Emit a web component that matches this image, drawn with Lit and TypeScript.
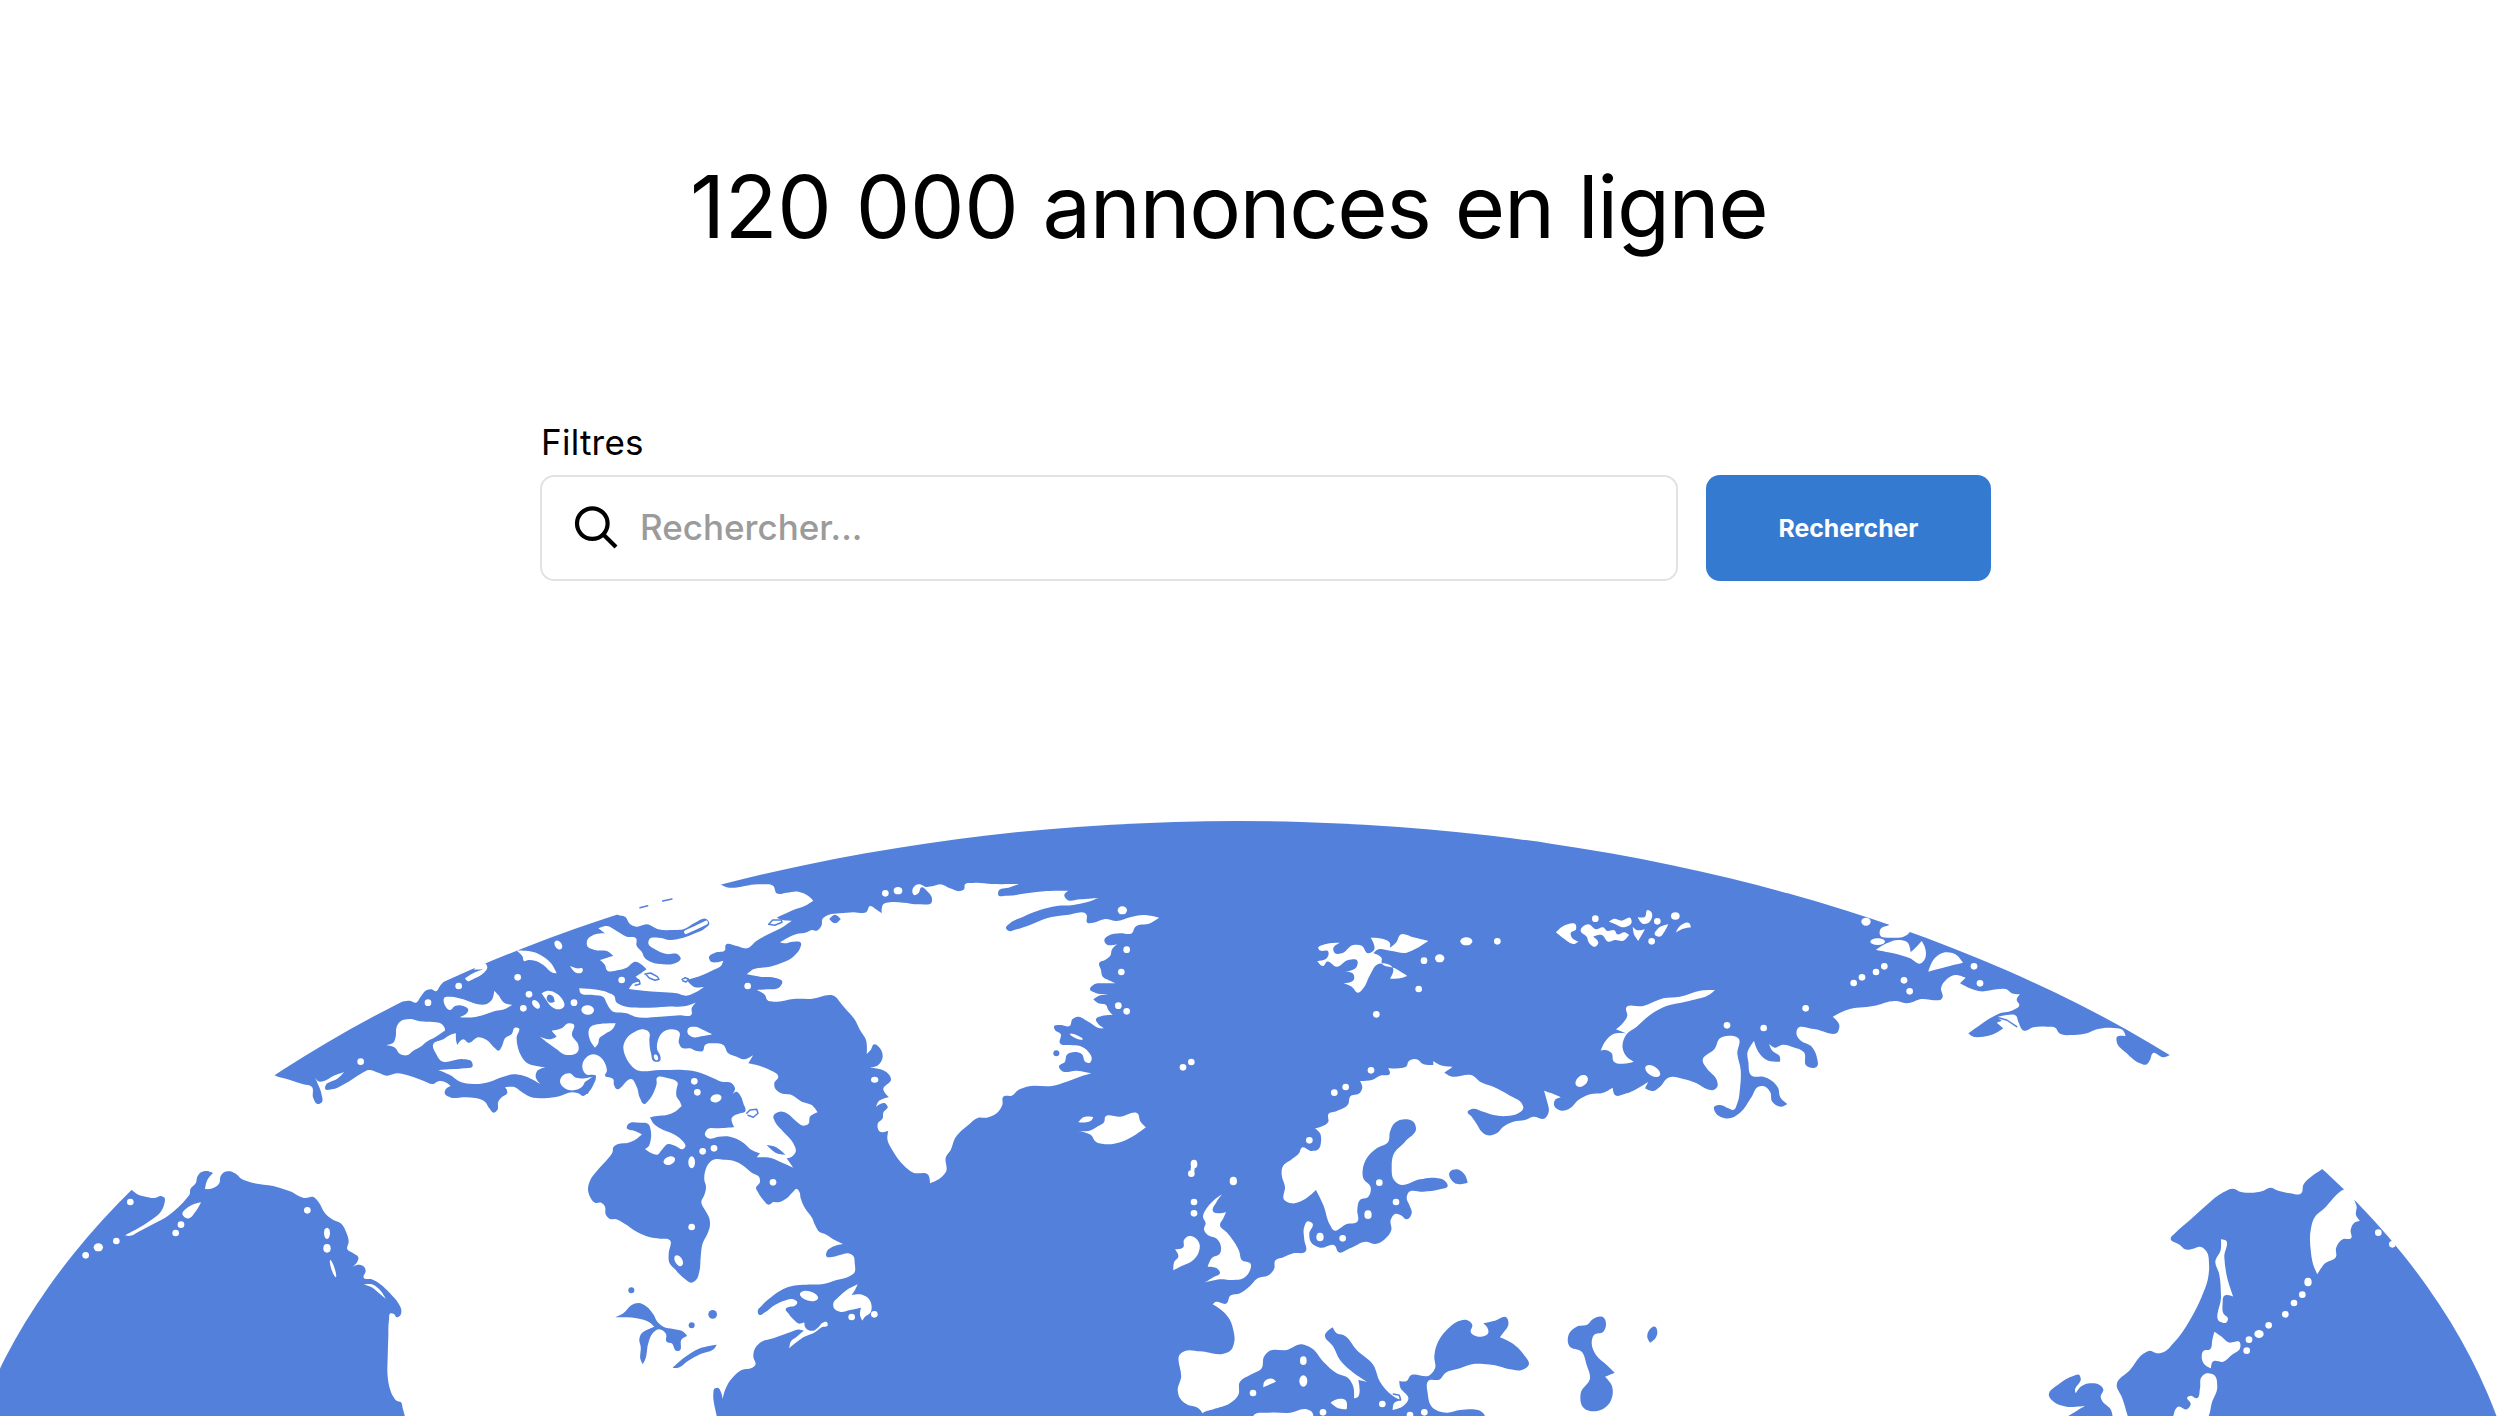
import { LitElement, html, svg, css } from "lit";
import { customElement } from "lit/decorators.js";

type Pt = [number, number];

/* Coastlines are drawn on sheets; each sheet has its own origin and three units per pixel. */
const SHEETS: Record<string, Pt> = {
  A: [250, 880],
  B: [580, 870],
  C: [840, 870],
  D: [560, 1080],
  E: [1040, 1050],
  F: [1300, 900],
  G: [1600, 960],
  H: [1820, 900],
  I: [2030, 1150],
  J: [0, 1150],
};

function place(sheet: string, x: number, y: number): Pt {
  const o = SHEETS[sheet];
  return [o[0] + x / 3, o[1] + y / 3];
}

function parse(src: string): Pt[] {
  let sheet = "A";
  const out: Pt[] = [];
  for (const tok of src.trim().split(/\s+/)) {
    if (SHEETS[tok]) {
      sheet = tok;
      continue;
    }
    const [x, y] = tok.split(",").map(Number);
    out.push(place(sheet, x, y));
  }
  return out;
}

/* Closed smooth curve through the points; sharp turns stay corners. */
function shore(src: string): string {
  const p = parse(src);
  const n = p.length;
  const dir: Pt[] = p.map((c, i) => {
    const a = p[(i + n - 1) % n];
    const b = p[(i + 1) % n];
    const ux = c[0] - a[0], uy = c[1] - a[1], vx = b[0] - c[0], vy = b[1] - c[1];
    const lu = Math.hypot(ux, uy) || 1, lv = Math.hypot(vx, vy) || 1;
    const cos = (ux * vx + uy * vy) / (lu * lv);
    if (cos < -0.1) return [0, 0];
    const tx = ux / lu / lu + vx / lv / lv, ty = uy / lu / lu + vy / lv / lv;
    const l = Math.hypot(tx, ty) || 1;
    return [tx / l, ty / l];
  });
  const f = (v: number) => v.toFixed(1);
  let d = `M${f(p[0][0])} ${f(p[0][1])}`;
  for (let i = 0; i < n; i++) {
    const j = (i + 1) % n;
    const k = Math.hypot(p[j][0] - p[i][0], p[j][1] - p[i][1]) / 3;
    d += `C${f(p[i][0] + dir[i][0] * k)} ${f(p[i][1] + dir[i][1] * k)} ${f(p[j][0] - dir[j][0] * k)} ${f(p[j][1] - dir[j][1] * k)} ${f(p[j][0])} ${f(p[j][1])}`;
  }
  return d + "Z";
}

function trace(src: string): string {
  return "M" + parse(src).map((q) => `${q[0].toFixed(1)} ${q[1].toFixed(1)}`).join("L");
}

const LAND = [
  // North America
  `J 395,120 415,134 440,141 465,144 482,138 492,142 492,165 480,188 450,212 412,236 374,256 385,258 420,243 460,222 500,200 535,172 560,145 569,133 571,118 588,98 592,80 603,67 620,63 639,69 622,90 615,117 630,117 658,100 662,78 672,67 690,64 705,70 725,87 760,99 820,108 870,124 915,144 940,141 955,155 975,190 1000,210 1022,220 1038,245 1046,275 1042,298 1060,310 1075,322 1070,338 1058,350 1075,344 1092,350 1097,362 1091,383 1115,388 1140,402 1170,430 1195,460 1204,480 1200,497 1190,502 1182,492 1172,490 1167,510 1165,560 1163,620 1163,680 1168,710 1180,740 1190,752 1203,757 1208,775 1215,800 1225,900
   D 470,1100 470,1008 463,975 460,945 465,925 473,923 483,937 488,957 492,940 505,910 525,885 545,870 575,864 586,855 580,830 582,812 600,788 640,775 690,757 720,749 731,752 710,770 692,785 688,805 705,790 730,772 765,757 785,742 803,736 800,726 788,728 775,742 760,752 745,750 735,740 733,727 718,731 700,718 685,700 677,687 690,680 705,677 712,667 700,658 670,663 640,678 615,697 597,704 593,693 605,677 635,650 670,627 700,617 740,614 790,612 830,600 870,588 883,578 884,550 880,528 865,520 840,525 815,531 800,530 800,515 815,502 849,492 820,478 795,462 780,457 765,435 757,415 735,385 722,355 718,335 710,327 698,337 680,355 655,367 640,366 627,374 610,360 595,338 588,325 600,305 598,292 575,278 550,257 520,242 490,239 460,239 445,252 435,275 433,300 438,320 433,345 424,365 435,390 448,415 450,435 443,460 428,490 422,530 418,575 408,600 393,608 375,597 345,568 328,548 326,520 329,480 300,476 265,470 230,455 195,432 165,417 150,417 138,405 134,378 125,369 105,368 90,350 84,328 90,302 115,268 145,235 158,215 160,202 175,192 205,188 225,180 246,163 225,153 200,142 205,132 240,128 265,132 272,150 272,180 265,200 255,207 275,220 292,224 305,210 325,192 345,197 370,207 376,200 365,180 340,162 300,145 280,130 270,112 290,108 320,105 345,95 365,78
   B 305,708 300,695 290,680 290,655 293,640 265,625 230,625 230,640 222,665 205,692 193,702 180,685 170,650 152,627 138,635 125,650 112,658 102,645 100,628 75,615
   A 1070,575 1067,555 1050,530 1030,523 1008,533 997,560 1008,583 1036,588 1030,615 1012,640 1000,648 985,640 965,637 930,648 880,655 840,650 810,632 795,622 765,622 772,638 755,652 745,665 742,690 732,698 718,685 705,665 680,655 640,652 600,652 584,640 587,628 602,618 585,606 565,604 550,612 520,602 480,588 440,580 410,587 385,578 355,570 335,580 290,608 245,628 226,627 228,614 240,606 262,596 282,577 250,588 222,603 205,604 195,592 205,615 214,640 214,668 203,672 190,655 185,620 160,613 120,600 72,585 20,540 -500,560
   J 300,60`,
  // Arctic archipelago
  `A 458,364 480,362 497,368 512,350 530,330 545,328 557,334 570,318 582,304 540,280 430,350`,
  `A 645,295 665,282 700,268 672,269 690,250 708,252 712,262 700,280 670,297 652,303`,
  `A 800,212 820,212 850,216 880,230 905,252 920,280 908,278 880,255 855,242 835,240 822,243 818,230`,
  `A 960,258 980,265 998,267 996,277 980,279`,
  `A 875,340 890,333 915,338 935,355 942,380 925,388 905,380 885,355`,
  `A 585,352 600,350 640,358 680,372 710,372 725,360 733,332 745,345 765,370 787,374 765,387 735,393 700,405 670,412 628,412 650,400 655,390 640,378 615,378 600,390 587,380`,
  `A 408,495 430,488 437,470 440,440 450,425 480,417 510,424 550,426 575,432 585,450 570,465 550,475 530,485 515,498 490,512 470,526 450,522 435,503`,
  `A 550,492 580,478 600,465 618,460 618,480 622,495 640,478 655,488 685,472 710,480 735,505 745,512 755,500 765,475 785,462 795,443 806,445 800,470 803,500 815,530 830,548 860,558 887,562 860,575 857,590 872,613 850,600 820,587 790,583 755,592 720,605 670,612 630,605 600,585 565,570 600,568 640,565 668,557 665,545 640,538 570,540 560,525`,
  `A 870,470 900,478 920,470 905,452 935,445 955,430 970,432 966,465 985,495 985,512 945,524 920,508 895,490`,
  `A 1022,440 1050,432 1097,430 1090,445 1065,462 1048,475 1045,490 1035,503 1025,490`,
  `A 930,603 945,582 960,580 975,592 1028,590 1010,605 990,625 950,628`,
  `B 115,135 135,140 150,162 168,170 200,163 235,178 280,180 310,178 345,158 380,148 388,160 375,175 345,190 310,203 270,210 235,203 208,208 205,220 225,238 260,252 295,254 302,265 285,280 250,283 215,277 195,265 185,245 170,228 168,205 140,200 110,183 80,168 55,175 75,190 40,195 22,210 22,228 45,240 85,245 100,257 60,270 75,285 80,300 115,300 140,293 165,275 200,298 185,308 165,322 180,335 160,340 147,357 190,362 240,366 290,370 318,377 350,365 373,350 345,352 320,330 360,318 400,300 425,285 430,272 390,272 387,262 405,248 435,240 437,225 470,228 500,235 530,212 560,195 610,170 635,152 608,150 590,143 640,120 680,105 700,92 685,78 655,65 620,68 590,70 580,48 540,43 425,45 400,20 100,100`,
  `B -2,355 40,358 85,368 103,378 108,395 130,408 180,413 260,410 320,407 347,398 335,415 335,433 300,436 240,440 165,440 140,430 95,422 80,400 72,383 40,375 0,367`,
  `B 325,475 345,470 370,480 397,493 370,498 335,500 323,490`,
  // Baffin
  `B 130,530 140,505 165,485 190,478 208,488 208,510 213,550 222,574 240,572 240,555 232,540 234,510 245,490 275,478 297,485 297,520 305,533 330,535 350,543 368,543 375,525 405,520 430,525 445,550 470,560 490,568 520,555 505,580 540,588 570,600 595,620 583,640 585,655 600,668 635,675 665,695 695,705 713,727 690,740 685,762 670,767 650,755 620,730 600,725 580,740 585,755 610,785 640,820 647,845 635,860 620,865 640,893 610,880 570,863 530,862 540,850 515,840 490,818 450,800 415,800 385,805 375,795 380,780 420,775 463,772 455,745 480,730 495,725 490,700 480,675 470,665 452,678 465,655 455,640 425,635 390,620 350,605 310,600 240,600 165,597 145,575 133,550`,
  `D 820,670 835,652 860,630 893,613 885,630 875,645 900,643 925,655 935,680 930,700 915,710 907,722 900,705 903,683 870,690 840,695 822,685`,
  // Greenland
  `B 600,217 615,208 650,192 680,187 695,180 710,182 725,165 727,148 745,135 780,130
   C 40,127 80,125 90,108 108,118 125,130 130,103 150,97 190,98 240,103 275,97 275,82 260,62 245,52 235,70 222,75 217,62 225,47 240,43 255,50 280,48 300,43 330,55 360,63 372,58 375,43 400,39 455,42 537,42 510,52 475,65 475,75 500,77 560,70 620,63 685,62 673,75 680,88 720,88 775,84 740,97 700,105 650,108 600,120 550,140 510,160 498,175 505,182 530,178 570,165 620,145 680,135 740,135 742,158 760,158 795,147 830,153 870,142 910,135 957,143 930,160 885,172 877,188 840,190 805,197 793,210 798,222 832,222 815,240 812,255 795,270 778,278 783,300 788,320 805,330 827,340 795,340 760,345 750,358 765,368 808,372 775,378 760,388 775,400 798,405 805,420 818,435 785,438 768,448 775,462 793,475 780,475 745,455 710,441 697,448 690,467 660,465 642,470 645,480 662,492 660,520 690,525 720,528 745,545 755,565 750,578 738,577 725,552 705,546 680,555 675,575 657,590 665,602 710,602 755,610 720,620 680,635 640,647 560,650 535,660 515,677 490,680 487,705 470,730 440,743 415,743 385,765 345,805 332,840 318,860 318,905 300,925 270,940 265,915 220,908 190,885 160,845 142,805 145,782 120,785 113,762 128,745 130,728 143,710 135,700 108,710 115,695 147,682 130,658 153,627 140,607 118,597 90,593 115,585 128,560 120,535 103,523 92,540 80,552 78,510 60,480 45,450 15,415 -5,390
   B 768,382 690,387 640,387 590,395 562,390 555,375 530,360 560,358 600,350 607,335 590,325 540,320 500,313 520,298 570,290 610,277 640,260 660,235 663,220 640,215 612,220`,
  // Iceland
  `C 713,783 745,783 775,768 793,755 795,742 840,740 895,733 900,752 918,772 890,792 845,815 800,823 765,813 755,797`,
  `C 715,757 730,742 760,741 755,750`,
  // British Isles
  `E 547,432 530,455 520,485 540,490 558,486 550,505 540,525 560,547 582,575 598,605 605,630 632,642 628,665 610,685 580,690 540,688 495,697 520,682 540,668 530,655 503,650 515,625 540,610 540,580 528,565 503,555 492,538 497,520 489,500 498,478 520,452`,
  `E 432,570 445,559 465,563 478,580 475,610 460,630 425,648 400,661 403,635 415,620 405,598 430,592`,
  // Svalbard
  `F 55,145 75,133 120,128 100,145 105,160 125,160 160,135 185,137 205,160 222,150 212,113 250,117 270,130 270,143 290,125 300,105 340,112 385,123 350,145 320,158 270,152 230,150 220,160 245,175 245,188 285,205 322,228 300,235 270,236 280,208 235,192 210,225 190,265 175,278 155,260 130,250 162,238 160,222 135,215 170,200 172,182 145,180 110,200 80,185 70,198 52,183 80,175 85,155 58,150`,
  // Franz Josef Land
  `F 768,97 790,78 828,76 828,88 812,100 815,112 835,125 825,131 790,115`,
  `F 842,92 865,73 888,88 910,82 920,92 945,92 950,102 975,97 987,105 970,122 945,120 925,125 905,105 880,110 895,130 885,140 868,130 860,110`,
  `F 927,65 940,57 965,62 992,55 995,65 970,82 945,72`,
  `F 1013,52 1035,50 1043,30 1053,35 1043,70 1030,72`,
  `F 998,80 1010,90 1035,88 1015,123 1003,105`,
  `F 1065,105 1075,85 1105,73 1095,92 1078,110`,
  `F 1127,98 1140,78 1168,70 1173,82 1145,88`,
  // Novaya Zemlya
  `G 78,145 130,138 190,115 240,110 300,92 345,90 330,103 270,122 190,142 150,165 110,200 78,225 68,265 80,290 102,305 40,303 35,280 15,270 2,272 15,245 40,222 78,220 48,208 82,165`,
  // Severnaya Zemlya and New Siberian Islands
  `H 208,75 180,90 180,105 215,113 255,108 270,95 260,60`,
  `H 167,150 200,130 235,120 262,127 272,157 285,145 305,123 314,140 313,180 303,190 270,175 220,160`,
  `H 325,215 340,180 375,157 405,162 429,188 380,200`,
  // Eurasia
  `E 487,1110 487,1090 475,1075 440,1063 420,1045 413,1020 423,985 423,910 435,903 480,904 550,911 570,903 583,875 580,840 570,810 550,785 518,763 525,757 560,760 570,738 600,730 630,708 650,687 690,673 703,655 705,633 730,622 760,610 797,604 793,570 793,530 803,514 817,520 808,550 812,575 840,593 885,587 895,606 930,595 980,575 1005,582 1040,562 1054,540 1052,510 1065,492 1085,497 1100,508 1115,490 1108,465 1100,445 1105,428 1150,425 1200,418 1223,407 1215,393 1180,383 1140,388 1075,402 1062,390 1055,350 1060,315 1095,275 1128,235 1120,215 1095,208 1065,218 1050,245 1045,275 1010,295 980,325 968,360 970,385 992,412 985,440 960,450 952,480 952,515 920,522 880,540 870,525 850,465 828,420 790,450 755,460 733,450 735,410 725,375 728,350 755,328 778,308 785,293 815,303 835,298 843,275 840,250 825,235 865,215 865,193 890,183 925,162 930,140 960,128 967,112 960,93 995,90 1020,77 1050,70 1045,55 1075,55 1100,48 1105,35 1135,30 1145,40 1180,45 1180,33 1200,45 1238,50 1213,68 1230,78
   F 520,528 540,545 580,560 630,587 665,610 670,625 655,640 620,648 580,645 550,635 515,627 503,635 515,650 530,672 545,695 560,705 590,700 610,680 640,665 675,660 700,650 735,655 745,640 740,600 732,572 755,580 783,592 765,600 762,615 785,632 810,625 835,600 870,583 910,578 938,563 945,585 980,580 1045,545 1035,565 1060,573 1080,560
   G 205,353 250,357 290,370 320,387 340,390 352,380 350,360 320,325 308,303 345,265 360,235 385,227 415,235 412,280 422,330 420,385 412,430 400,450 385,445 360,435 342,442 345,455 390,475 420,458 455,410 475,380 490,378 510,395 517,425 545,440 562,432 540,410 535,385 515,362 490,350 455,347 445,305 442,280 462,243 475,275 500,300 540,305 540,292 515,270 507,252 525,263 545,255 580,262 612,277 620,318 650,320 650,290 635,260 600,240 590,225 592,207 640,207 715,213 718,195 698,170 740,150 820,138 890,123 920,130 960,118
   H 368,290 363,265 380,238 405,225 437,233 420,250 450,265 480,274 530,268 560,268 575,280 600,283 590,300 598,315 580,330 540,340 510,355 480,375 445,400 455,408 490,410 520,403 550,385 530,368 545,362 530,352 560,345 588,347 595,365 612,392 640,382 680,380 708,385 715,397 760,405 800,400 830,388 880,384 910,392 917,408 890,412 890,425 920,460 960,490 978,494 990,480 998,460 1030,472 1050,465 1120,440 1500,600
   I 880,55 850,75 820,105 814,130 780,130 745,122 720,113 700,122 650,128 630,125 610,116 580,127 530,165 480,210 435,250 422,265 450,285 465,298 490,296 510,290 530,305 537,340 533,390 515,440 480,510 430,580 400,607 380,610 360,602 345,608 300,660 260,705 275,740 293,798 310,860`,
  // Kamchatka
  `I 945,117 880,178 855,200 842,240 842,300 850,345 862,373 885,340 918,320 918,295 940,267 963,265 962,240 975,217 990,213 978,195 980,170 973,147 1000,110`,
  // Sakhalin, Hokkaido, Honshu
  `I 573,268 585,270 583,320 592,385 610,440 583,437 578,460 580,490 594,507 588,518 572,516 573,440 567,370 556,335 572,300`,
  `I 553,545 575,560 595,577 630,578 630,595 605,615 580,635 548,635 543,655 525,645 515,620 520,603 540,598 547,570`,
  `I 515,680 530,670 552,675 562,710 545,760 535,800 430,830 430,798 445,770 470,778 482,762 472,742 482,737 500,745 510,715`,
  // Alaskan coast islets
  `J 548,195 570,168 603,157 590,180 560,205`,
  `J 1090,403 1115,403 1138,418 1157,446 1140,432 1115,412`,
];

const WATER = [
  `A 895,345 908,348 914,365 900,368 890,355`,
  `B 748,147 765,134 782,147 765,160`,
  `B 560,825 585,830 617,855 590,850`,
  `D 165,712 190,700 215,675 235,669 260,680 280,703 292,725 310,740 340,747 370,755 382,768 365,778 358,812 350,813 335,790 320,785 318,762 298,748 278,760 265,790 255,840 248,853 242,840 242,800 238,778 245,760 265,748 283,740 270,728 230,715 200,712`,
  `D 338,863 370,835 420,805 470,794 465,803 420,823 385,842 350,864`,
  `E 1230,365 1250,358 1275,375 1283,398 1245,400`,
  // Mediterranean and Black Sea
  `E 487,1090 520,1078 570,1060 595,1035 600,995 630,975 665,955 672,920 685,905 740,900 785,883 815,895 850,935 890,970 925,985 940,1010 942,1045 950,1043 955,990 980,995 930,960 900,930 880,890 855,855 878,832 890,850 910,855 950,900 1000,945 1020,995 1055,1035 1080,1050 1062,1060 1058,1080 1090,1068 1105,1048 1080,1010 1078,993 1100,993 1110,978 1170,975 1185,955 1183,920 1190,885 1220,840 1260,812 1280,810 1297,825 1292,845 1320,860 1345,848 1340,830 1330,820 1365,812 1400,803 1405,825 1390,848 1380,862 1420,882 1450,912 1466,945 1445,960 1410,958 1365,946 1330,942 1300,942 1260,955 1215,970 1200,988 1165,993 1163,1030 1175,1070 1220,1088 1260,1080 1330,1090 1330,1160 487,1160`,
  // Caspian Sea
  `E 1588,850 1610,830 1645,822 1655,810 1692,804 1698,825 1690,845 1662,855 1655,880 1668,915 1700,945 1724,968 1695,980 1715,1006 1711,1055 1672,1083 1632,1075 1622,1030 1650,985 1640,945 1625,905 1588,888`,
  `E 1822,862 1828,840 1845,830 1852,845 1845,866 1830,878`,
  // Yellow Sea
  `I 245,830 243,780 215,750 212,740 220,718 205,703 180,700 155,708 137,730 135,722 152,685 148,675 130,678 90,700 57,738 75,758 110,770 165,767 115,798 60,830`,
];

const ISLES = [
  `E 670,1012 672,997 700,987 708,995 690,1003`,
  `E 872,1058 885,1050 918,1052 920,1078 895,1075`,
  `E 640,1098 690,1088 750,1088 800,1078 815,1085 822,1110 640,1130`,
];

/* sheet, x, y, rx, ry, rotation */
const DOTS: [string, number, number, number?, number?, number?][] = [
  ["A", 925, 195, 10, 15, -35], ["A", 803, 292], ["A", 626, 318], ["A", 534, 368], ["A", 837, 343],
  ["A", 820, 385], ["A", 972, 368], ["A", 1115, 300], ["A", 332, 545], ["A", 858, 373, 9, 15, -40], ["A", 1013, 390, 19, 14, 5],
  ["B", 503, 348], ["B", 343, 634], ["B", 352, 667], ["B", 408, 685, 17, 12, -15], ["B", 368, 844], ["B", 402, 835],
  ["B", 268, 872, 18, 12, -20], ["B", 335, 877, 10, 18], ["B", 228, 562, 6, 9, -20],
  ["D", 395, 441], ["D", 356, 542, 11, 18, -30], ["D", 639, 307], ["D", 747, 648, 28, 14, 15], ["D", 875, 711], ["D", 943, 703],
  ["C", 136, 70], ["C", 174, 62, 13, 11], ["C", 847, 121, 14, 12], ["C", 860, 239], ["C", 844, 306], ["C", 835, 407], ["C", 860, 424],
  ["C", 104, 629, 11, 9], ["C", 709, 500, 21, 5, 23],
  ["E", 429, 52], ["E", 454, 36], ["E", 993, 61], ["E", 917, 111], ["E", 883, 128], ["E", 808, 271], ["E", 1018, 398], ["E", 1068, 456],
  ["E", 462, 456], ["E", 462, 490], ["E", 908, 565], ["E", 639, 1029], ["E", 1027, 1062], ["E", 849, 1087], ["E", 1153, 1087], ["E", 1110, 1095],
  ["E", 580, 393, 11, 13], ["E", 984, 494, 11, 13], ["E", 840, 561, 11, 13], ["E", 790, 932, 10, 13], ["E", 790, 993, 12, 17],
  ["E", 462, 342, 10, 13], ["E", 454, 371], ["E", 458, 357, 6, 10],
  ["F", 372, 182], ["F", 419, 175, 14, 12], ["F", 499, 124, 18, 12], ["F", 592, 124], ["F", 356, 267], ["F", 229, 343],
  ["F", 845, 543, 21, 15, -40], ["F", 1058, 513, 25, 14, 32], ["F", 886, 56], ["F", 1072, 64], ["F", 1055, 124], ["F", 1126, 48, 13, 11],
  ["G", 381, 196], ["G", 491, 204], ["G", 617, 145],
  ["H", 101, 249], ["H", 126, 232], ["H", 168, 216], ["H", 193, 199], ["H", 252, 241], ["H", 269, 274], ["H", 462, 199], ["H", 480, 250],
  ["H", 138, 65, 14, 12], ["H", 173, 125, 22, 10],
  ["I", 834, 396, 11, 13], ["I", 817, 434], ["I", 792, 459], ["I", 766, 493], ["I", 716, 526], ["I", 687, 552, 14, 12], ["I", 657, 569],
  ["I", 650, 602], ["I", 1045, 248], ["I", 1087, 283],
  ["J", 391, 156], ["J", 257, 316], ["J", 349, 273], ["J", 295, 292, 14, 12], ["J", 543, 224], ["J", 527, 249], ["J", 922, 181],
  ["J", 981, 250, 9, 17], ["J", 981, 295, 11, 13], ["J", 999, 356, 5, 27, -18],
];

const PONDS: [string, number, number, number][] = [
  ["C", 649, 550, 9], ["D", 214, 631, 9], ["D", 458, 703, 13], ["D", 395, 736, 9],
];

const CREEKS = [
  `B 195,312 212,309 232,320 237,328 225,331 208,324 197,313`,
  `B 306,328 316,323 326,328 318,336 308,332`,
  `B 165,322 178,332 180,342 166,346`,
  `B 566,163 578,150 604,150 606,157 584,166 566,163`,
  `B 500,730 510,720 530,718 534,730 520,742 504,736`,
  `A 584,458 565,480 552,484 556,474 582,456`,
  `A 733,627 745,638 765,638 768,630 752,625`,
  `A 1036,588 1012,640 992,640 1006,608 1036,588`,
  `B 180,113 203,107`,
  `B 248,93 276,87`,
  `H 530,352 560,360 590,380`,
  `E 1060,1032 1078,1036 1082,1050 1062,1050`,
];

@customElement("app-root")
export class AppRoot extends LitElement {
  static styles = css`
    :host {
      display: block;
      width: 2520px;
      height: 1416px;
      overflow: hidden;
      background: #fff;
      color: #000;
      font-family: Inter, "Liberation Sans", sans-serif;
    }
    .page {
      display: flex;
      flex-direction: column;
      height: 100%;
    }
    .hero {
      flex: none;
      box-sizing: border-box;
      height: 815px;
      padding: 154px 0 0 540px;
    }
    .title {
      margin: 0 0 0 150px;
      font-size: 86.5px;
      line-height: 106px;
      font-weight: 400;
      letter-spacing: -1.4px;
      word-spacing: 1.3px;
      white-space: nowrap;
    }
    .count {
      letter-spacing: -0.4px;
      word-spacing: 0.6px;
    }
    .label {
      display: block;
      margin: 160px 0 0 1px;
      font-size: 35px;
      line-height: 44px;
      letter-spacing: 0.25px;
    }
    .search {
      display: flex;
      align-items: stretch;
      gap: 28px;
      height: 106px;
      margin-top: 10.6px;
    }
    .field {
      display: flex;
      align-items: center;
      box-sizing: border-box;
      width: 1138px;
      padding-left: 32px;
      border: 2px solid #e1e3e3;
      border-radius: 14px;
    }
    .icon {
      width: 46px;
      height: 46px;
      margin-right: 20px;
    }
    .placeholder {
      color: #9b9b9b;
      font-size: 35px;
      line-height: 44px;
      font-weight: 500;
      padding-bottom: 1px;
    }
    .button {
      width: 285px;
      padding: 1px 0 0;
      border: 0;
      border-radius: 14px;
      background: #357ad1;
      color: #fff;
      font: 700 24.8px/30px Inter, "Liberation Sans", sans-serif;
    }
    .globe {
      display: block;
      flex: none;
    }
    .sea {
      fill: #5280db;
    }
    .land {
      fill: #fff;
    }
    .creek {
      fill: none;
      stroke: #5280db;
      stroke-width: 1.5;
      stroke-linecap: round;
      stroke-linejoin: round;
    }
    .spit {
      fill: none;
      stroke: #fff;
      stroke-width: 4;
      stroke-linecap: round;
    }
  `;

  private dot([s, x, y, rx = 10, ry = 10, r = 0]: [string, number, number, number?, number?, number?]) {
    const [cx, cy] = place(s, x, y);
    return svg`<ellipse class="land" cx=${cx} cy=${cy} rx=${rx / 3} ry=${ry / 3} transform=${`rotate(${r} ${cx} ${cy})`}></ellipse>`;
  }

  private globe() {
    return html`<svg class="globe" width="2520" height="601" viewBox="0 815 2520 601" aria-hidden="true">
      <ellipse class="sea" cx="1238" cy="1577" rx="1288" ry="756"></ellipse>
      ${LAND.map((s) => svg`<path class="land" d=${shore(s)}></path>`)}
      ${WATER.map((s) => svg`<path class="sea" d=${shore(s)}></path>`)}
      ${ISLES.map((s) => svg`<path class="land" d=${shore(s)}></path>`)}
      ${PONDS.map(([s, x, y, r]) => {
        const [cx, cy] = place(s, x, y);
        return svg`<circle class="sea" cx=${cx} cy=${cy} r=${r / 3}></circle>`;
      })}
      ${CREEKS.map((s) => svg`<path class="creek" d=${trace(s)}></path>`)}
      <path class="spit" d=${trace("B 318,186 345,174 378,158")}></path>
      ${DOTS.map((d) => this.dot(d))}
    </svg>`;
  }

  render() {
    return html`<main class="page">
      <section class="hero">
        <h1 class="title"><span class="count">120 000</span> annonces en ligne</h1>
        <span class="label">Filtres</span>
        <div class="search">
          <div class="field">
            <svg class="icon" viewBox="0 0 46 46" fill="none" stroke="#000" stroke-width="4.2">
              <circle cx="18.3" cy="18.6" r="15.3"></circle>
              <path d="M28.8 29.1 42 42"></path>
            </svg>
            <span class="placeholder">Rechercher...</span>
          </div>
          <button class="button">Rechercher</button>
        </div>
      </section>
      ${this.globe()}
    </main>`;
  }
}
